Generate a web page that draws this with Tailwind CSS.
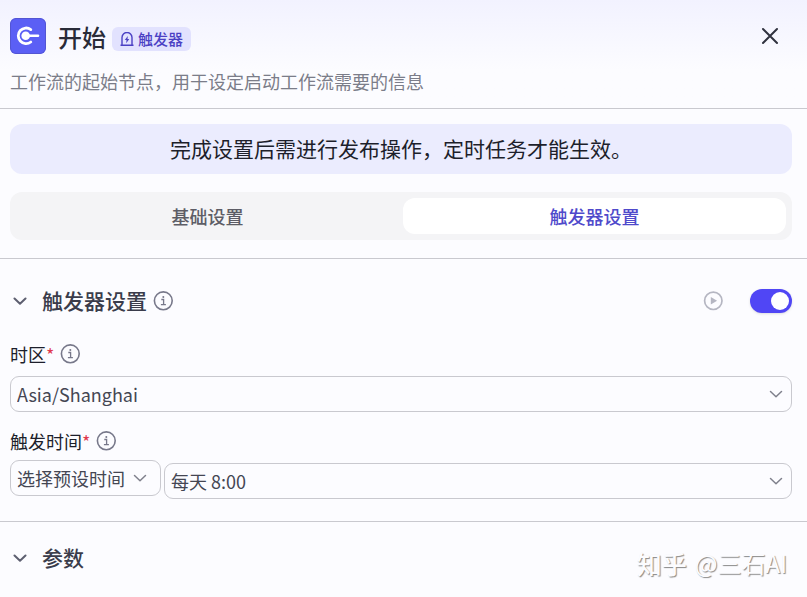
<!DOCTYPE html>
<html lang="zh-CN">
<head>
<meta charset="UTF-8">
<meta name="viewport" content="width=device-width, initial-scale=1">
<title>开始</title>
<script src="https://cdn.jsdelivr.net/npm/@tailwindcss/browser@4"></script>
</head>
<body class="relative min-h-screen overflow-x-hidden bg-[#fcfcff] font-['Noto_Sans_CJK_SC',sans-serif] text-[#1d1f2b]">
<svg class="hidden">
  <symbol id="info" viewBox="0 0 20 20" fill="none" stroke="currentColor">
    <circle cx="10.300" cy="9.800" r="8.900" stroke-width="1.600"/>
    <path d="M8.300 8.500h2.300v5M7.900 13.600h5" stroke-width="1.300"/>
    <circle cx="10.300" cy="5.900" r="1" fill="currentColor" stroke="none"/>
  </symbol>
  <symbol id="chevron" viewBox="0 0 14 8" fill="none" stroke="currentColor" stroke-linecap="round" stroke-linejoin="round">
    <path d="M1.500 1.500 7 6.700l5.500-5.200"/>
  </symbol>
</svg>

<header class="border-b border-[#c9c9cf] bg-linear-to-b from-[#f2f2ff] to-[#fcfcff] to-65% pt-[18px] pr-[15px] pb-[13px] pl-2.5">
  <div class="flex h-9 items-center">
    <svg class="size-9 rounded-md bg-[#5b5ff5]" viewBox="0 0 36 36" fill="none">
      <rect x=".5" y=".5" width="35" height="35" rx="5.500" stroke="#5355d2"/>
      <path d="M20.800 11.600A7.800 7.800 0 1 0 20.800 24" stroke="#fff" stroke-width="2.800" stroke-linecap="round"/>
      <circle cx="15.700" cy="17.800" r="4.300" fill="#fff"/>
      <path d="M17 17.800h11" stroke="#fff" stroke-width="2.600" stroke-linecap="round"/>
    </svg>
    <h1 class="ml-3 pt-0.5 text-2xl leading-9 font-medium text-[#292b38]">开始</h1>
    <span class="mt-1.5 ml-1.5 flex h-6 items-center gap-1 rounded-md bg-[#e2e2fe] px-2 text-[15px] leading-6 font-medium text-[#4b41c4]">
      <svg class="size-[14px]" viewBox="0 0 14 14" fill="none" stroke="currentColor" stroke-width="1.400" stroke-linejoin="round">
        <path d="M2 13V5.500a5 5 0 0 1 10 0V13M.5 13.200h13"/>
        <path d="M7.800 4 4.800 8h1.700L6.200 11.200 9.300 7H7.500z" fill="currentColor" stroke="none"/>
      </svg>
      触发器
    </span>
    <button type="button" aria-label="关闭" class="ml-auto flex size-11 items-center justify-center">
      <svg class="size-[18px]" viewBox="0 0 18 18" fill="none" stroke="#30323f" stroke-width="2" stroke-linecap="round"><path d="m2 2 14 14M16 2 2 16"/></svg>
    </button>
  </div>
  <p class="mt-3.5 text-lg leading-[27px] text-[#7b7d89]">工作流的起始节点，用于设定启动工作流需要的信息</p>
</header>

<section class="border-b border-[#c9c9cf] pt-[15px] pr-[15px] pb-[18px] pl-2.5">
  <p class="rounded-xl bg-[#ebecfe] pt-[9px] pb-[11px] text-center text-[21px] leading-[30px]">完成设置后需进行发布操作，定时任务才能生效。</p>
  <div role="tablist" class="mt-[18px] grid grid-cols-2 gap-1 rounded-xl bg-[#f4f4f6] p-1.5 text-lg leading-9 font-medium">
    <button type="button" role="tab" aria-selected="false" class="h-9 rounded-xl text-[#5d5d66]">基础设置</button>
    <button type="button" role="tab" aria-selected="true" class="h-9 rounded-xl bg-white text-[#4f4acb]">触发器设置</button>
  </div>
</section>

<section class="border-b border-[#c9c9cf] pt-[27px] pr-[15px] pb-[22px] pl-2.5">
  <div class="flex h-[30px] items-center">
    <button type="button" aria-label="折叠触发器设置" class="flex w-5 justify-center text-[#5d5f70]"><svg class="h-2 w-[14px] stroke-2"><use href="#chevron"/></svg></button>
    <h2 class="ml-3 pb-0.5 text-[21px] leading-[30px] font-medium text-[#3a3c4b]">触发器设置</h2>
    <svg class="ml-1.5 size-5 text-[#77788a]"><use href="#info"/></svg>
    <button type="button" aria-label="运行" class="ml-auto text-[#b5b6c2]">
      <svg class="size-5" viewBox="0 0 20 20"><circle cx="10.300" cy="9.800" r="8.700" fill="none" stroke="currentColor" stroke-width="1.700"/><path d="M7.800 6v7.600L14.100 9.800z" fill="currentColor"/></svg>
    </button>
    <input type="checkbox" role="switch" aria-label="启用触发器" checked class="ml-[27px] flex h-6 w-[42px] cursor-pointer appearance-none items-center rounded-full bg-[#b5b6c2] p-[3px] shadow-sm before:size-[18px] before:rounded-full before:bg-white checked:justify-end checked:bg-[#5046f5]">
  </div>

  <div class="mt-[23px] flex items-center">
    <label for="timezone" class="text-lg leading-[30px]">时区<span class="text-[#e0394f]">*</span></label>
    <svg class="ml-1.5 size-5 text-[#77788a]"><use href="#info"/></svg>
  </div>
  <div class="relative mt-[7px] flex items-center">
    <select id="timezone" class="h-9 w-full appearance-none rounded-[9px] border border-[#c9c9cf] bg-transparent px-1.5 text-lg text-[#444653]"><option>Asia/Shanghai</option></select>
    <svg class="pointer-events-none absolute right-[9px] h-2 w-[14px] stroke-[1.5] text-[#7f808c]"><use href="#chevron"/></svg>
  </div>

  <div class="mt-3.5 flex items-center">
    <label for="time" class="text-lg leading-[30px]">触发时间<span class="text-[#e0394f]">*</span></label>
    <svg class="ml-1.5 size-5 text-[#77788a]"><use href="#info"/></svg>
  </div>
  <div class="mt-1 flex gap-[3px]">
    <div class="relative flex h-9 w-[151px] items-center">
      <select aria-label="时间类型" class="h-9 w-full appearance-none rounded-[9px] border border-[#c9c9cf] bg-transparent px-1.5 text-lg text-[#444653]"><option>选择预设时间</option></select>
      <svg class="pointer-events-none absolute right-[14px] h-2 w-[14px] stroke-[1.5] text-[#7f808c]"><use href="#chevron"/></svg>
    </div>
    <div class="relative mt-[3px] flex flex-1 items-center">
      <select id="time" class="h-9 w-full appearance-none rounded-[9px] border border-[#c9c9cf] bg-transparent px-1.5 text-lg text-[#444653]"><option>每天 8:00</option></select>
      <svg class="pointer-events-none absolute right-[9px] h-2 w-[14px] stroke-[1.5] text-[#7f808c]"><use href="#chevron"/></svg>
    </div>
  </div>
</section>

<section class="flex items-center pt-5 pr-[15px] pl-2.5">
  <button type="button" aria-label="折叠参数" class="flex w-5 justify-center text-[#5d5f70]"><svg class="h-2 w-[14px] stroke-2"><use href="#chevron"/></svg></button>
  <h2 class="ml-3 pb-0.5 text-[21px] leading-[30px] font-medium text-[#3a3c4b]">参数</h2>
</section>
<div class="pointer-events-none absolute right-5 bottom-4 flex gap-2 text-2xl leading-9 text-[#fcfcff] [text-shadow:1px_1px_1px_#888]"><span class="text-[25px] font-medium">知乎</span><span>@三石AI</span></div>
</body>
</html>
